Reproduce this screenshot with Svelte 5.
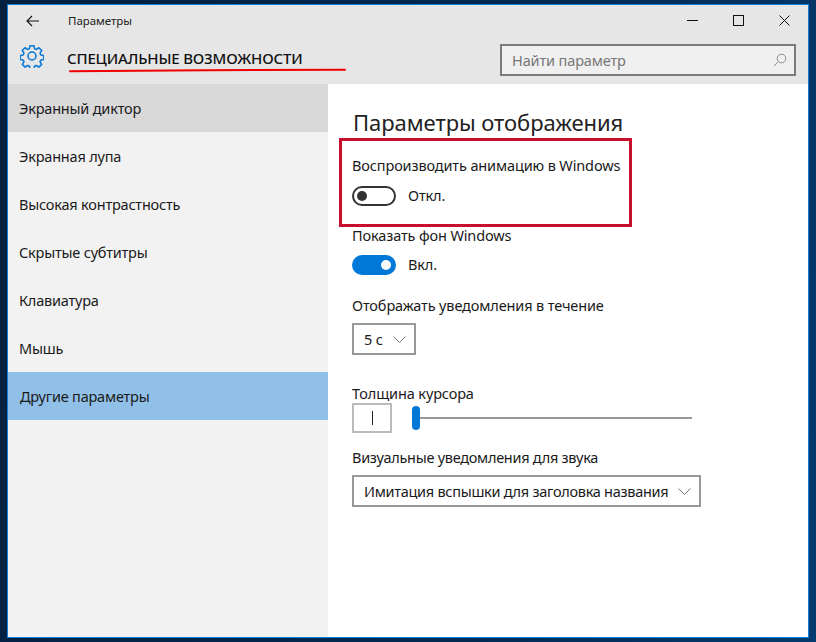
<script>
  const items = [
    { label: 'Экранный диктор', state: 'hover' },
    { label: 'Экранная лупа', state: '' },
    { label: 'Высокая контрастность', state: '' },
    { label: 'Скрытые субтитры', state: '' },
    { label: 'Клавиатура', state: '' },
    { label: 'Мышь', state: '' },
    { label: 'Другие параметры', state: 'active' }
  ];
</script>

<div class="desktop">
  <div class="window">
    <header class="head">
      <div class="titlebar">
        <svg class="back" width="14" height="12" viewBox="0 0 14 12"><path d="M13 6H1M6 1 1 6l5 5" fill="none" stroke="#111" stroke-width="1.1"/></svg>
        <span class="apptitle">Параметры</span>
        <div class="controls">
          <svg width="11" height="11" viewBox="0 0 11 11"><path d="M0 5.5h11" stroke="#111" stroke-width="1"/></svg>
          <svg width="11" height="11" viewBox="0 0 11 11"><rect x=".5" y=".5" width="10" height="10" fill="none" stroke="#111"/></svg>
          <svg width="11" height="11" viewBox="0 0 11 11"><path d="M.5.5l10 10M10.5.5l-10 10" stroke="#111" stroke-width="1"/></svg>
        </div>
      </div>
      <div class="headrow">
        <svg class="gear" width="24" height="24" viewBox="0 0 26 26" fill="none" stroke="#0a78d7" stroke-width="1.7" stroke-linejoin="round">
          <path d="M10.9 1.8h4.2l.6 3.2 2 .9 2.8-1.8 3 3-1.8 2.800.9 2 3.100.6v4.200l-3.100.6-.9 2 1.800 2.800-3 3-2.800-1.800-2 .9-.6 3.100h-4.200l-.6-3.100-2-.9-2.800 1.800-3-3 1.800-2.800-.9-2-3.100-.6v-4.200l3.100-.6.9-2L2.400 7.100l3-3 2.800 1.800 2-.9z"/>
          <circle cx="13" cy="13" r="4.300"/>
        </svg>
        <h1>СПЕЦИАЛЬНЫЕ ВОЗМОЖНОСТИ</h1>
        <div class="search">
          <span>Найти параметр</span>
          <svg width="14" height="14" viewBox="0 0 14 14" fill="none" stroke="#8a8a8a" stroke-width="1"><circle cx="8.500" cy="5.500" r="4.300"/><path d="M5.300 8.500 1 13"/></svg>
        </div>
      </div>
    </header>
    <div class="body">
      <nav class="side">
        {#each items as item}
          <div class="item {item.state}">{item.label}</div>
        {/each}
      </nav>
      <main class="content">
        <h2>Параметры отображения</h2>
        <div class="label first">Воспроизводить анимацию в Windows</div>
        <div class="toggle-row off-row">
          <span class="toggle off"><i></i></span><span>Откл.</span>
        </div>
        <div class="label second">Показать фон Windows</div>
        <div class="toggle-row on-row">
          <span class="toggle on"><i></i></span><span>Вкл.</span>
        </div>
        <div class="label third">Отображать уведомления в течение</div>
        <div class="select short">
          <span>5 с</span>
          <svg width="13" height="7" viewBox="0 0 13 7"><path d="M.5.5l6 6 6-6" fill="none" stroke="#777"/></svg>
        </div>
        <div class="label fourth">Толщина курсора</div>
        <div class="cursor-row">
          <div class="cursor-box"><b></b></div>
          <div class="slider"><em></em><u></u></div>
        </div>
        <div class="label fifth">Визуальные уведомления для звука</div>
        <div class="select long">
          <span>Имитация вспышки для заголовка названия</span>
          <svg width="13" height="7" viewBox="0 0 13 7"><path d="M.5.5l6 6 6-6" fill="none" stroke="#777"/></svg>
        </div>
      </main>
    </div>
  </div>
  <svg class="underline" width="280" height="5" viewBox="0 0 280 5"><path d="M2 3.300 C80 2.400 200 2 277 1.800" fill="none" stroke="#f00000" stroke-width="2" stroke-linecap="round"/></svg>
  <div class="redbox"></div>
</div>

<style>
  :global(body) { margin: 0; }
  .desktop {
    position: relative;
    width: 816px;
    height: 642px;
    box-sizing: border-box;
    padding: 4px 7px 0 7px;
    overflow: hidden;
    background: linear-gradient(100deg, #04203f 0%, #032a52 60%, #043a6e 100%);
    font-family: "Noto Sans", sans-serif;
    font-size: 14.5px;
    letter-spacing: -0.13px;
    color: #1a1a1a;
  }
  .window {
    width: 802px;
    height: 634px;
    box-sizing: border-box;
    border: 1px solid #0f7fdc;
    display: flex;
    flex-direction: column;
    background: #fff;
  }
  .head { height: 79px; background: #e6e6e6; flex: none; }
  .titlebar { height: 31px; display: flex; align-items: center; }
  .back { margin-left: 18px; }
  .apptitle { margin-left: 28px; font-size: 11.5px; letter-spacing: -0.05px; color: #222; }
  .controls { margin-left: auto; display: flex; gap: 35px; padding-right: 18px; }
  .headrow { height: 48px; display: flex; align-items: flex-start; }
  .gear { margin: 8px 0 0 12px; }
  h1 { margin: 11px 0 0 23px; font-size: 15px; font-weight: 500; line-height: 22px; letter-spacing: -0.16px; color: #111; }
  .search {
    margin: 8px 12px 0 auto;
    width: 296px;
    height: 32px;
    box-sizing: border-box;
    border: 2px solid #7a7a7a;
    background: #f0f0f0;
    display: flex;
    align-items: center;
    justify-content: space-between;
    padding: 0 7px 0 10px;
    color: #777;
  }
  .body { flex: 1; display: flex; min-height: 0; }
  .side { width: 320px; background: #f2f2f2; flex: none; }
  .item { height: 48px; line-height: 48px; padding-left: 11px; letter-spacing: -0.2px; }
  .item.hover { background: #d9d9d9; }
  .item.active { background: #90c0e8; padding-left: 12px; }
  .content { flex: 1; padding-left: 24px; }
  h2 { margin: 23px 0 0 1px; font-size: 22px; font-weight: 400; line-height: 30px; letter-spacing: -0.05px; color: #222; }
  .label { line-height: 20px; }
  .first { margin-top: 18px; }
  .second { margin-top: 19px; }
  .third { margin-top: 20px; }
  .fourth { margin-top: 28px; }
  .fifth { margin-top: 13px; letter-spacing: -0.28px; }
  .toggle-row { display: flex; align-items: center; gap: 12px; height: 20px; }
  .off-row { margin-top: 11px; }
  .on-row { margin-top: 10px; }
  .toggle-row span:last-child { position: relative; top: -1px; }
  .toggle { width: 44px; height: 20px; box-sizing: border-box; border-radius: 10px; display: flex; align-items: center; }
  .toggle i { width: 10px; height: 10px; border-radius: 50%; display: block; }
  .toggle.off { border: 2px solid #333; padding-left: 3px; }
  .toggle.off i { background: #333; }
  .toggle.on { background: #0078d7; padding-left: 29px; }
  .toggle.on i { background: #fff; }
  .select {
    box-sizing: border-box;
    height: 32px;
    margin-top: 8px;
    border: 2px solid #999;
    display: flex;
    align-items: center;
    justify-content: space-between;
    padding: 0 8px 0 10px;
    white-space: nowrap;
  }
  .short { width: 64px; }
  .long { width: 349px; letter-spacing: -0.28px; }
  .cursor-row { display: flex; align-items: center; margin-top: -1px; height: 32px; }
  .cursor-box {
    width: 40px; height: 30px; box-sizing: border-box;
    border: 2px solid #bbb;
    display: flex; align-items: center; justify-content: center;
  }
  .cursor-box b { width: 1px; height: 14px; background: #222; display: block; }
  .slider { margin-left: 20px; width: 280px; height: 24px; display: flex; align-items: center; }
  .slider em { width: 8px; height: 24px; background: #0078d7; border-radius: 4px; display: block; flex: none; }
  .slider u { flex: 1; height: 2px; background: #999; display: block; }
  .underline { position: absolute; left: 68px; top: 68px; }
  .redbox {
    position: absolute;
    left: 339px; top: 138px;
    width: 293px; height: 89px;
    box-sizing: border-box;
    border: 3px solid #c8102e;
  }
</style>
